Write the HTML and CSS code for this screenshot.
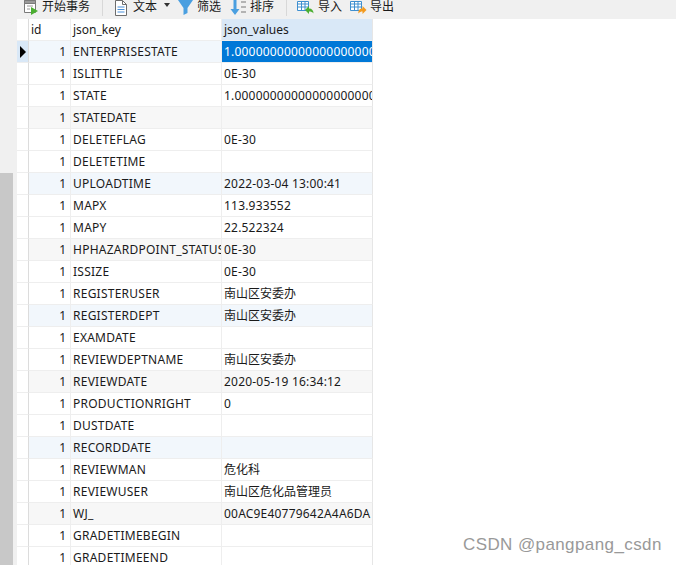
FILE: index.html
```html
<!DOCTYPE html>
<html lang="zh">
<head>
<meta charset="utf-8">
<title>json_values</title>
<link rel="stylesheet" href="styles.css">
</head>
<body>
<div class="toolbar">
  <div class="tool t-begin">
    <svg class="ic" width="17" height="19" viewBox="0 0 17 19"><path d="M2.500 .5h11v12h-11z" fill="#fff" stroke="#7a7a7a"/><path d="M2.500 .5h11v3h-11z" fill="#9a9a9a" stroke="#7a7a7a"/><path d="M5 6h6M5 9h3" stroke="#9a9a9a"/><path d="M9 7l7 4-7 4z" fill="#4caf32"/></svg>
    <span>开始事务</span>
  </div>
  <i class="sep s1"></i>
  <div class="tool t-text">
    <svg class="ic" width="14" height="19" viewBox="0 0 14 19"><path d="M1.500 .5h7l4 4v11h-11z" fill="#fff" stroke="#6d6d6d"/><path d="M8.500 .5v4h4" fill="none" stroke="#6d6d6d"/><path d="M3.500 7h7M3.500 9.500h7M3.500 12h7" stroke="#4a90d9"/></svg>
    <span>文本</span>
    <svg class="caret" width="6" height="4" viewBox="0 0 6 4"><path d="M0 0h6l-3 4z" fill="#333"/></svg>
  </div>
  <div class="tool t-filter">
    <svg class="ic" width="15" height="19" viewBox="0 0 15 19"><path d="M0 0h15L9.500 8v5l-4 2V8z" fill="#4a9fe0"/></svg>
    <span>筛选</span>
  </div>
  <div class="tool t-sort">
    <svg class="ic" width="17" height="19" viewBox="0 0 17 19"><path d="M3.500 0h3v9h3L5 15 .5 9h3z" fill="#4a9fe0"/><path d="M11 2h5M11 7h5M11 12h5" stroke="#777"/></svg>
    <span>排序</span>
  </div>
  <i class="sep s2"></i>
  <div class="tool t-import">
    <svg class="ic" width="17" height="19" viewBox="0 0 17 19"><path d="M.5 1.500h11v9H.5zM.5 4h11M4.500 1.500v9M8 1.500v9M.5 7h11" fill="#fff" stroke="#3f8fcf"/><path d="M8 10l4-4v2.500c3 0 4.500 2 4.500 5-1-1.500-2.500-2-4.500-2V14z" fill="#4caf32"/></svg>
    <span>导入</span>
  </div>
  <div class="tool t-export">
    <svg class="ic" width="17" height="19" viewBox="0 0 17 19"><path d="M.5 1.500h11v9H.5zM.5 4h11M4.500 1.500v9M8 1.500v9M.5 7h11" fill="#fff" stroke="#3f8fcf"/><path d="M16.500 10l-4-4v2.500c-3 0-4.500 2-4 5 1-1.500 2.500-2 4-2V14z" fill="#f39a1e"/></svg>
    <span>导出</span>
  </div>
</div>
<div class="main">
  <div class="side"><div class="thumb"></div></div>
  <div class="grid">
    <div class="row head"><div class="c g"></div><div class="c">id</div><div class="c">json_key</div><div class="c v">json_values</div></div>
    <div class="row cur"><div class="c g"><svg width="6" height="12" viewBox="0 0 6 12"><path d="M0 0l6 6-6 6z" fill="#000"/></svg></div><div class="c n">1</div><div class="c k">ENTERPRISESTATE</div><div class="c v d sel">1.000000000000000000000000000000</div></div>
    <div class="row"><div class="c g"></div><div class="c n">1</div><div class="c k">ISLITTLE</div><div class="c v d">0E-30</div></div>
    <div class="row"><div class="c g"></div><div class="c n">1</div><div class="c k">STATE</div><div class="c v d">1.000000000000000000000000000000</div></div>
    <div class="row gr"><div class="c g"></div><div class="c n">1</div><div class="c k">STATEDATE</div><div class="c v"></div></div>
    <div class="row"><div class="c g"></div><div class="c n">1</div><div class="c k">DELETEFLAG</div><div class="c v d">0E-30</div></div>
    <div class="row"><div class="c g"></div><div class="c n">1</div><div class="c k">DELETETIME</div><div class="c v"></div></div>
    <div class="row bl"><div class="c g"></div><div class="c n">1</div><div class="c k">UPLOADTIME</div><div class="c v d">2022-03-04 13:00:41</div></div>
    <div class="row"><div class="c g"></div><div class="c n">1</div><div class="c k">MAPX</div><div class="c v d">113.933552</div></div>
    <div class="row"><div class="c g"></div><div class="c n">1</div><div class="c k">MAPY</div><div class="c v d">22.522324</div></div>
    <div class="row gr"><div class="c g"></div><div class="c n">1</div><div class="c k">HPHAZARDPOINT_STATUS</div><div class="c v d">0E-30</div></div>
    <div class="row"><div class="c g"></div><div class="c n">1</div><div class="c k">ISSIZE</div><div class="c v d">0E-30</div></div>
    <div class="row"><div class="c g"></div><div class="c n">1</div><div class="c k">REGISTERUSER</div><div class="c v">南山区安委办</div></div>
    <div class="row bl"><div class="c g"></div><div class="c n">1</div><div class="c k">REGISTERDEPT</div><div class="c v">南山区安委办</div></div>
    <div class="row"><div class="c g"></div><div class="c n">1</div><div class="c k">EXAMDATE</div><div class="c v"></div></div>
    <div class="row"><div class="c g"></div><div class="c n">1</div><div class="c k">REVIEWDEPTNAME</div><div class="c v">南山区安委办</div></div>
    <div class="row gr"><div class="c g"></div><div class="c n">1</div><div class="c k">REVIEWDATE</div><div class="c v d">2020-05-19 16:34:12</div></div>
    <div class="row"><div class="c g"></div><div class="c n">1</div><div class="c k">PRODUCTIONRIGHT</div><div class="c v d">0</div></div>
    <div class="row"><div class="c g"></div><div class="c n">1</div><div class="c k">DUSTDATE</div><div class="c v"></div></div>
    <div class="row bl"><div class="c g"></div><div class="c n">1</div><div class="c k">RECORDDATE</div><div class="c v"></div></div>
    <div class="row"><div class="c g"></div><div class="c n">1</div><div class="c k">REVIEWMAN</div><div class="c v">危化科</div></div>
    <div class="row"><div class="c g"></div><div class="c n">1</div><div class="c k">REVIEWUSER</div><div class="c v">南山区危化品管理员</div></div>
    <div class="row gr"><div class="c g"></div><div class="c n">1</div><div class="c k">WJ_</div><div class="c v d">00AC9E40779642A4A6DA</div></div>
    <div class="row"><div class="c g"></div><div class="c n">1</div><div class="c k">GRADETIMEBEGIN</div><div class="c v"></div></div>
    <div class="row"><div class="c g"></div><div class="c n">1</div><div class="c k">GRADETIMEEND</div><div class="c v"></div></div>
  </div>
</div>
<div class="mark">CSDN @pangpang_csdn</div>
</body>
</html>
```

FILE: styles.css
```css
html, body {
  margin: 0;
  height: 565px;
  overflow: hidden;
  background: #fff;
}
body {
  position: relative;
  font-family: "Noto Sans", "Noto Sans CJK SC", sans-serif;
  font-size: 12px;
  color: #1a1a1a;
}
.toolbar {
  height: 19px;
  background: #f0f0f0;
  overflow: hidden;
  display: flex;
  align-items: flex-start;
}
.tool {
  display: flex;
  align-items: center;
  margin-top: -7px;
  height: 24px;
  font-size: 12px;
  white-space: nowrap;
}
.tool .ic { flex: none; margin-top: 9px; }
.tool span { font-family: "Noto Sans CJK SC", sans-serif; }
.t-begin { margin-left: 22px; gap: 3px; }
.sep {
  flex: none;
  width: 1px;
  height: 16px;
  background: #d8d8d8;
}
.s1 { margin-left: 12px; }
.t-text { margin-left: 11px; gap: 5px; }
.caret { margin-left: 2px; }
.t-filter { margin-left: 8px; gap: 4px; }
.t-sort { margin-left: 9px; gap: 3px; }
.s2 { margin-left: 12px; }
.t-import { margin-left: 10px; gap: 4px; }
.t-export { margin-left: 8px; gap: 3px; }

.main { display: flex; }
.side {
  flex: none;
  width: 17px;
  height: 546px;
  background: #f0f0f0;
  padding-top: 154px;
  box-sizing: border-box;
}
.thumb {
  width: 13px;
  height: 392px;
  background: #c8c8c8;
}
.grid { flex: none; width: 356px; }
.row {
  display: grid;
  grid-template-columns: 12px 42px 151px 151px;
  height: 22px;
}
.c {
  box-sizing: border-box;
  height: 22px;
  line-height: 21px;
  padding: 0 2px;
  border-right: 1px solid #eeeeee;
  border-bottom: 1px solid #eeeeee;
  white-space: nowrap;
  overflow: hidden;
}
.g {
  padding: 0;
  border-right-color: #dcdcdc;
  display: flex;
  align-items: center;
  justify-content: center;
}
.n { text-align: right; padding-right: 4px; }
.k { letter-spacing: .25px; }
.d { letter-spacing: .2px; }
.v { border-right-color: #e6e6e6; }
.head .v { background: #d9e8f7; }
.cur .c { background: #f2f7fc; }
.cur .sel { background: #0078d7; color: #fff; }
.bl .c { background: #f2f7fc; }
.gr .c { background: #f7f7f7; }
.row .g { background-color: #fff; }
.cur .g { background-color: #d9e8f7; }
.mark {
  position: absolute;
  left: 463px;
  top: 535px;
  font-family: "Liberation Sans", sans-serif;
  font-size: 17px;
  letter-spacing: .4px;
  color: #999999;
}
```
